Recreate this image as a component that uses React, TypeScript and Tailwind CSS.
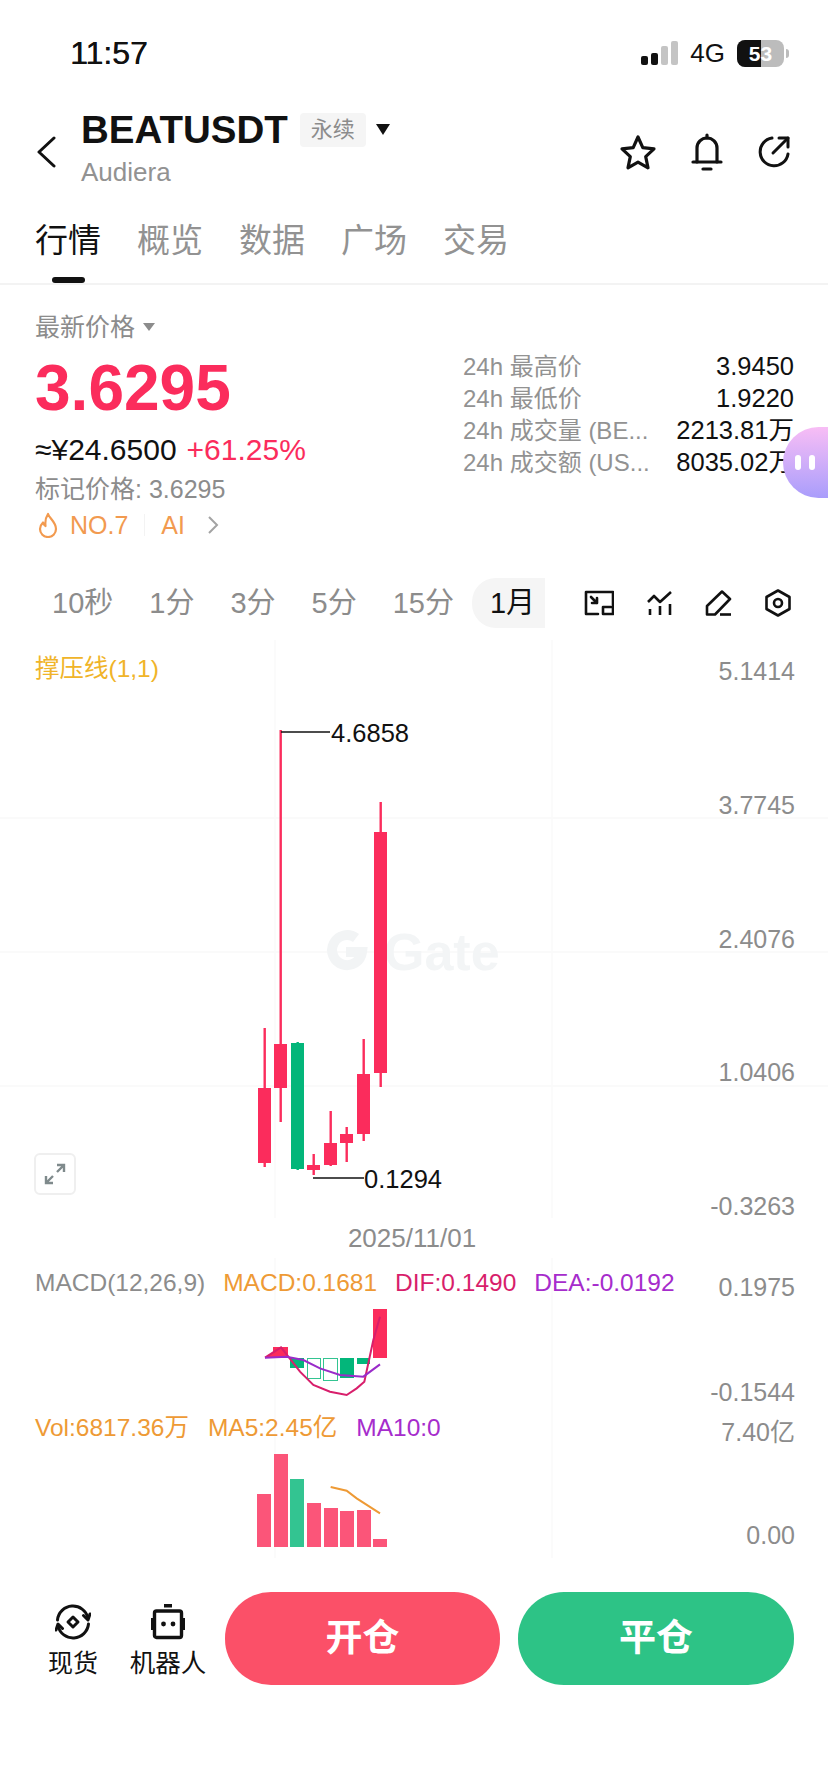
import React from "react";

const RED = "#fb2c5c";
const GREEN = "#03b67a";

const candles = [
  { x: 258, top: 1088, bot: 1163, wt: 1028, wb: 1167, c: RED },
  { x: 274, top: 1044, bot: 1088, wt: 730, wb: 1122, c: RED },
  { x: 291, top: 1043, bot: 1169, wt: 1042, wb: 1170, c: GREEN },
  { x: 307, top: 1165, bot: 1170, wt: 1154, wb: 1175, c: RED },
  { x: 324, top: 1143, bot: 1165, wt: 1111, wb: 1166, c: RED },
  { x: 340, top: 1134, bot: 1143, wt: 1127, wb: 1162, c: RED },
  { x: 357, top: 1074, bot: 1134, wt: 1039, wb: 1141, c: RED },
  { x: 374, top: 832, bot: 1073, wt: 802, wb: 1087, c: RED },
];

const vols = [
  { x: 257, top: 1494, c: "#fb5579" },
  { x: 274, top: 1454, c: "#fb5579" },
  { x: 290, top: 1479, c: "#33c491" },
  { x: 307, top: 1503, c: "#fb5579" },
  { x: 324, top: 1508, c: "#fb5579" },
  { x: 340, top: 1511, c: "#fb5579" },
  { x: 357, top: 1510, c: "#fb5579" },
  { x: 373, top: 1539, c: "#fb5579" },
];

function MainChart() {
  return (
    <svg className="absolute inset-0" width="828" height="578" viewBox="0 640 828 578">
      {[818, 952, 1086].map((y) => (
        <line key={y} x1="0" x2="828" y1={y} y2={y} stroke="#f8f8f8" strokeWidth="1.5" />
      ))}
      {[275, 552].map((x) => (
        <line key={x} x1={x} x2={x} y1="640" y2="1218" stroke="#fafafa" strokeWidth="1.5" />
      ))}
      <path d="M356 938A15 15 0 1 0 362 952H346" fill="none" stroke="#f2f4f5" strokeWidth="10" />
      <text x="384" y="970" fontSize="52" fontWeight="700" fill="#f3f5f6" fontFamily="Liberation Sans, sans-serif">Gate</text>
      {candles.map((k) => (
        <g key={k.x}>
          <rect x={k.x + 5.5} y={k.wt} width="2.4" height={k.wb - k.wt} fill={k.c} />
          <rect x={k.x} y={k.top} width="13" height={k.bot - k.top} fill={k.c} />
        </g>
      ))}
      <line x1="281" x2="330" y1="732" y2="732" stroke="#111" strokeWidth="1.5" />
      <line x1="313" x2="364" y1="1178" y2="1178" stroke="#111" strokeWidth="1.5" />
      <text x="331" y="742" fontSize="25.5" fill="#111" fontFamily="Liberation Sans, sans-serif">4.6858</text>
      <text x="364" y="1188" fontSize="25.5" fill="#111" fontFamily="Liberation Sans, sans-serif">0.1294</text>
    </svg>
  );
}

function MacdChart() {
  const pts = (a: number[][]) => a.map(([x, y]) => `${240 + x / 3},${1260 + y / 3}`).join(" ");
  return (
    <svg className="absolute inset-0" width="828" height="300" viewBox="0 1258 828 300">
      {[275, 552].map((x) => (
        <line key={x} x1={x} x2={x} y1="1258" y2="1558" stroke="#fafafa" strokeWidth="1.5" />
      ))}
      <rect x="273" y="1347" width="15" height="11" fill={RED} />
      <rect x="373" y="1309" width="14" height="49" fill={RED} />
      <rect x="290" y="1358" width="14" height="10" fill={GREEN} />
      <rect x="307.5" y="1358.5" width="13" height="20" fill="#fff" stroke="#33c491" />
      <rect x="323.5" y="1358.5" width="14" height="22" fill="#fff" stroke="#33c491" />
      <rect x="340" y="1358" width="14" height="20" fill={GREEN} />
      <rect x="357" y="1358" width="13" height="6" fill={GREEN} />
      <polygon points={pts([[75, 293], [123, 262], [145, 290]])} fill={RED} />
      <polyline
        fill="none"
        stroke="#d81e6b"
        strokeWidth="2"
        points={pts([[75, 293], [123, 262], [145, 290], [180, 335], [220, 375], [270, 395], [320, 405], [350, 385], [373, 365], [400, 240], [420, 170]])}
      />
      <polyline
        fill="none"
        stroke="#9a2bc9"
        strokeWidth="2"
        points={pts([[75, 293], [140, 290], [190, 300], [240, 325], [300, 345], [370, 350], [420, 313]])}
      />
      {vols.map((v) => (
        <rect key={v.x} x={v.x} y={v.top} width="14" height={1547 - v.top} fill={v.c} />
      ))}
      <polyline
        fill="none"
        stroke="#ee9a35"
        strokeWidth="2"
        points={pts([[272, 681], [320, 692], [350, 715], [420, 760]])}
      />
    </svg>
  );
}

function Signal() {
  return (
    <div className="flex items-end gap-[3px] h-[24px]">
      <div className="w-[7px] h-[9px] rounded-[2px] bg-[#111]" />
      <div className="w-[7px] h-[12px] rounded-[2px] bg-[#111]" />
      <div className="w-[7px] h-[19px] rounded-[2px] bg-[#c4c4c4]" />
      <div className="w-[7px] h-[24px] rounded-[2px] bg-[#c4c4c4]" />
    </div>
  );
}

function Battery() {
  return (
    <div className="flex items-center gap-[2px]">
      <div className="relative w-[47px] h-[27px] rounded-[8px] bg-[#bcbcbc] overflow-hidden">
        <div className="absolute left-0 top-0 bottom-0 w-[24px] bg-[#111]" />
        <div className="absolute inset-0 flex items-center justify-center text-white font-bold text-[21px] leading-none">53</div>
      </div>
      <div className="w-[3px] h-[9px] rounded-r-full bg-[#bcbcbc]" />
    </div>
  );
}

function Legend({ children, color }: { children: React.ReactNode; color: string }) {
  return <span style={{ color }}>{children}</span>;
}

function StatRow({ label, value }: { label: string; value: string }) {
  return (
    <div className="flex items-center justify-between h-[32px]">
      <span className="text-[24px] text-[#929292] leading-none">{label}</span>
      <span className="text-[25.500px] text-[#111] leading-none">{value}</span>
    </div>
  );
}

export default function App() {
  return (
    <div className="relative w-[828px] h-[1792px] bg-white overflow-hidden text-[#111] font-['Liberation_Sans','Noto_Sans_CJK_SC',sans-serif]">
      {/* status bar */}
      <div className="flex items-center justify-between h-[106px] pl-[70px] pr-[39px]">
        <span className="text-[32px] font-medium leading-none [text-shadow:0.4px_0_0_#111]">11:57</span>
        <div className="flex items-center gap-[12px]">
          <Signal />
          <span className="text-[26px] leading-none">4G</span>
          <Battery />
        </div>
      </div>

      {/* header */}
      <div className="flex items-center h-[86px] pl-[36px] pr-[37px] -mt-[3px]">
        <svg width="20" height="32" viewBox="0 0 20 32" fill="none" stroke="#111" strokeWidth="3" strokeLinecap="round" strokeLinejoin="round" className="mt-[12px]">
          <path d="M18 2 3 16l15 14" />
        </svg>
        <div className="ml-[25px] mt-[2px] flex flex-col">
          <div className="flex items-center">
            <span className="text-[38.500px] font-bold leading-[44px] text-[#111]">BEATUSDT</span>
            <span className="ml-[12px] w-[66px] h-[34px] flex items-center justify-center bg-[#f5f5f5] rounded-[4px] text-[22px] text-[#8c8c8c] leading-none">永续</span>
            <span className="ml-[10px] w-0 h-0 border-l-[7.5px] border-r-[7.5px] border-t-[11px] border-l-transparent border-r-transparent border-t-[#111]" />
          </div>
          <span className="text-[26px] leading-[30px] text-[#929292] mt-[5px]">Audiera</span>
        </div>
        <div className="ml-auto flex items-center gap-[34px] mt-[12px]">
          <svg width="38" height="36" viewBox="0 0 38 36" fill="none" stroke="#111" strokeWidth="3.2" strokeLinejoin="round">
            <path d="M19 3l4.8 10.6 11.2 1.3-8.3 7.7 2.3 11.2L19 28.200l-10 5.600 2.300-11.200L3 14.900l11.200-1.300z" />
          </svg>
          <svg width="32" height="38" viewBox="0 0 32 38" fill="none" stroke="#111" strokeWidth="3.2" strokeLinecap="round">
            <path d="M6 29V15a10 10 0 0 1 20 0v14" />
            <path d="M2 29h28" />
            <path d="M16 2v3" />
            <path d="M12 36h8" />
          </svg>
          <svg width="34" height="34" viewBox="0 0 34 34" fill="none" stroke="#111" strokeWidth="3" strokeLinecap="round" strokeLinejoin="round">
            <path d="M15 3A14 14 0 1 0 31 19" />
            <path d="M16 18 31 3" />
            <path d="M22 3h9v9" />
          </svg>
        </div>
      </div>

      {/* tabs */}
      <div className="relative flex gap-[36px] pl-[35px] mt-[30px] h-[66px] border-b-2 border-[#f3f3f3] text-[33px] leading-[44px] text-[#929292]">
        <span className="text-[#111]">行情</span>
        <span>概览</span>
        <span>数据</span>
        <span>广场</span>
        <span>交易</span>
        <div className="absolute left-[52px] bottom-0 w-[33px] h-[6px] rounded-[3px] bg-[#111]" />
      </div>

      {/* price info */}
      <div className="relative flex h-[292px] pl-[35px] pr-[34px]">
        <div className="flex flex-col w-[428px]">
          <div className="flex items-center mt-[25px] h-[34px]">
            <span className="text-[25px] text-[#8c8c8c] leading-none">最新价格</span>
            <span className="ml-[8px] w-0 h-0 border-l-[6px] border-r-[6px] border-t-[8px] border-l-transparent border-r-transparent border-t-[#8c8c8c]" />
          </div>
          <div className="text-[64px] font-bold leading-none mt-[12px] h-[70px]" style={{ color: RED }}>3.6295</div>
          <div className="flex items-center gap-[10px] text-[30px] leading-none mt-[9px]">
            <span className="text-[#111]">≈¥24.6500</span>
            <span style={{ color: RED }}>+61.25%</span>
          </div>
          <div className="text-[25px] text-[#8c8c8c] leading-none mt-[12px]">标记价格: 3.6295</div>
          <div className="flex items-center mt-[10px] text-[25px] leading-none text-[#f29a4f]">
            <svg width="22" height="26" viewBox="0 0 22 26" fill="none" stroke="#f29a4f" strokeWidth="2.200" strokeLinejoin="round" className="ml-[2px]">
              <path d="M11 2c1 4 8 8 8 15a8 8 0 0 1-16 0c0-3 1.500-5 3-6.500 .5 2 1.500 3 2.500 3.500C8 10 9 5 11 2z" />
            </svg>
            <span className="ml-[11px]">NO.7</span>
            <span className="ml-[16px] w-[1px] h-[22px] bg-[#f3f3f3]" />
            <span className="ml-[16px]">AI</span>
            <svg width="12" height="20" viewBox="0 0 12 20" fill="none" stroke="#a3a3a3" strokeWidth="2" className="ml-[22px]">
              <path d="M2 2l8 8-8 8" />
            </svg>
          </div>
        </div>
        <div className="flex-1 mt-[66px]">
          <StatRow label="24h 最高价" value="3.9450" />
          <StatRow label="24h 最低价" value="1.9220" />
          <StatRow label="24h 成交量 (BE..." value="2213.81万" />
          <StatRow label="24h 成交额 (US..." value="8035.02万" />
        </div>
        <div className="absolute right-0 top-[142px] w-[45px] h-[71px] rounded-l-[36px] bg-gradient-to-b from-[#f8bdf5] to-[#a99dfb] flex items-center justify-center gap-[8px] pr-[2px]">
          <div className="w-[6px] h-[15px] rounded-full bg-white" />
          <div className="w-[6px] h-[15px] rounded-full bg-white" />
        </div>
      </div>

      {/* timeframe row */}
      <div className="flex items-center h-[64px] -mt-[6px] pl-[52px] pr-[37px] text-[29px] text-[#8c8c8c] leading-none">
        <div className="flex items-center gap-[36px]">
          <span>10秒</span>
          <span>1分</span>
          <span>3分</span>
          <span>5分</span>
          <span>15分</span>
        </div>
        <div className="ml-[18px] w-[73px] h-[50px] rounded-l-[24px] bg-[#f5f5f5] flex items-center pl-[18px] text-[#111]">1月</div>
        <div className="ml-auto flex items-center gap-[33px]">
          <svg width="30" height="26" viewBox="0 0 30 26" fill="none" stroke="#111" strokeWidth="2.600" strokeLinecap="round" strokeLinejoin="round">
            <path d="M14 24H2V2h27v13" />
            <rect x="19" y="17" width="10" height="7" />
            <path d="M7 7l6 6M13 8v5H8" />
          </svg>
          <svg width="25" height="26" viewBox="0 0 25 26" fill="none" stroke="#111" strokeWidth="2.600" strokeLinejoin="round">
            <path d="M1 12l6-6 6 6L24 2" />
            <path d="M3 19v6M13 16v9M23 14v11" />
          </svg>
          <svg width="27" height="26" viewBox="0 0 27 26" fill="none" stroke="#111" strokeWidth="2.600" strokeLinejoin="round">
            <path d="M2 16 17 1.500 25 9 10 24.500H2z" />
            <path d="M15 24.500h11" />
          </svg>
          <svg width="26" height="28" viewBox="0 0 26 28" fill="none" stroke="#111" strokeWidth="2.600" strokeLinejoin="round">
            <path d="M13 1.500 24.500 8v12L13 26.500 1.500 20V8z" />
            <circle cx="13" cy="14" r="4" />
          </svg>
        </div>
      </div>

      {/* main chart */}
      <div className="relative h-[578px] mt-[5px]">
        <MainChart />
        <div className="absolute left-[35px] top-[14px] text-[24.500px] leading-[30px] text-[#f0b429]">撑压线(1,1)</div>
        <div className="absolute right-[33px] top-[16px] bottom-[-3px] flex flex-col justify-between items-end text-[25px] leading-[30px] text-[#8c8c8c]">
          <span>5.1414</span>
          <span>3.7745</span>
          <span>2.4076</span>
          <span>1.0406</span>
          <span>-0.3263</span>
        </div>
      </div>

      {/* date */}
      <div className="h-[40px] flex items-center justify-center pr-[4px] text-[26px] text-[#8c8c8c] leading-none">2025/11/01</div>

      {/* macd + volume */}
      <div className="relative h-[300px]">
        <MacdChart />
        <div className="absolute left-[35px] top-[10px] flex gap-[18px] text-[24.500px] leading-[30px]">
          <Legend color="#8c8c8c">MACD(12,26,9)</Legend>
          <Legend color="#ee9a35">MACD:0.1681</Legend>
          <Legend color="#d81e6b">DIF:0.1490</Legend>
          <Legend color="#a62ccc">DEA:-0.0192</Legend>
        </div>
        <div className="absolute left-[35px] top-[155px] flex gap-[19px] text-[24.500px] leading-[30px]">
          <Legend color="#ee9a35">Vol:6817.36万</Legend>
          <Legend color="#ee9a35">MA5:2.45亿</Legend>
          <Legend color="#a62ccc">MA10:0</Legend>
        </div>
        <div className="absolute right-[33px] top-[14px] h-[278px] flex flex-col items-end text-[25px] leading-[30px] text-[#8c8c8c]">
          <span>0.1975</span>
          <span className="mt-[75px]">-0.1544</span>
          <span className="mt-[10px]">7.40亿</span>
          <span className="mt-[73px]">0.00</span>
        </div>
      </div>

      {/* bottom bar */}
      <div className="flex items-center mt-[34px] h-[93px] pl-[48px] pr-[34px]">
        <div className="flex flex-col items-center w-[50px] mt-[4px]">
          <svg width="36" height="36" viewBox="0 0 36 36" fill="none" stroke="#111" strokeWidth="3" strokeLinecap="round" strokeLinejoin="round">
            <path d="M2.500 16A15.500 15.500 0 0 1 33 14" />
            <path d="M28.500 11.500 33 16l2-6" />
            <path d="M33.500 20A15.500 15.500 0 0 1 3 22" />
            <path d="M7.500 24.500 3 20l-2 6" />
            <path d="M18 13 23 18l-5 5-5-5z" />
          </svg>
          <span className="text-[25px] leading-[28px] mt-[9px]">现货</span>
        </div>
        <div className="flex flex-col items-center w-[76px] ml-[32px] mt-[4px]">
          <svg width="36" height="36" viewBox="0 0 36 36" fill="#111">
            <rect x="14" y="0" width="8" height="3.500" />
            <rect x="4.500" y="7" width="27" height="26.500" rx="2" fill="none" stroke="#111" strokeWidth="3.400" />
            <rect x="1" y="14" width="3" height="12" />
            <rect x="32" y="14" width="3" height="12" />
            <circle cx="13.500" cy="20" r="2.400" />
            <circle cx="23" cy="20" r="2.400" />
          </svg>
          <span className="text-[25.500px] leading-[28px] mt-[9px] whitespace-nowrap">机器人</span>
        </div>
        <div className="ml-[19px] w-[275px] h-[93px] rounded-[46px] bg-[#fb5068] flex items-center justify-center text-white text-[37px] font-bold leading-none">开仓</div>
        <div className="ml-[18px] w-[276px] h-[93px] rounded-[46px] bg-[#2dc386] flex items-center justify-center text-white text-[37px] font-bold leading-none">平仓</div>
      </div>

      {/* expand button over chart */}
      <div className="absolute left-[34px] top-[1153px] w-[42px] h-[42px] rounded-[6px] border-2 border-[#efefef] bg-white flex items-center justify-center">
        <svg width="24" height="24" viewBox="0 0 24 24" fill="none" stroke="#7f8a8c" strokeWidth="2.400">
          <path d="M14 3h7v7M21 3l-7 7" />
          <path d="M10 21H3v-7M3 21l7-7" />
        </svg>
      </div>
    </div>
  );
}
